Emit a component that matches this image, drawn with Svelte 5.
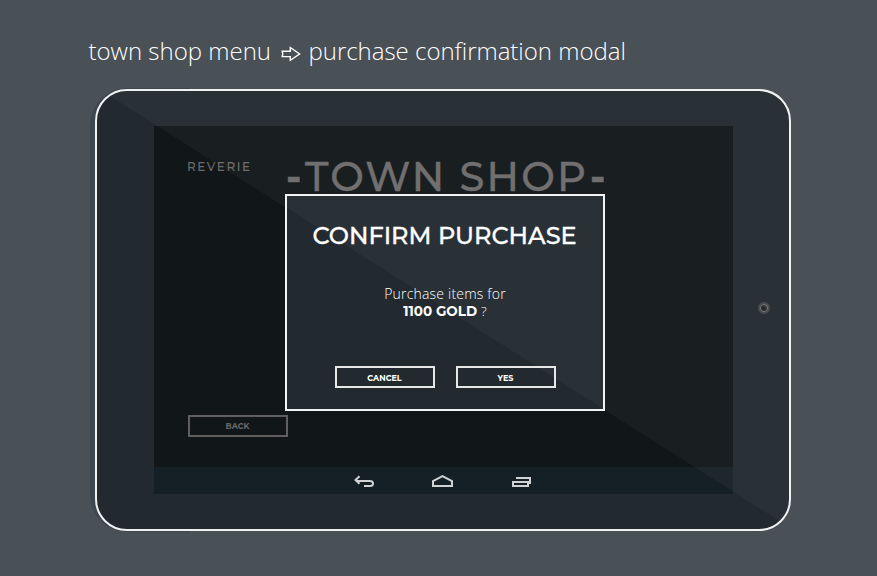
<script>
  let { price = 1100 } = $props();
</script>

<main>
  <header>
    <span class="from">town shop menu</span>
    <svg class="arrow" width="20" height="16" viewBox="0 0 20 16" aria-hidden="true">
      <path d="M1.2 5.3H9.3V1.5L18.6 8L9.3 14.3V10.6H1.2L1.8 8Z" />
    </svg>
    <span class="to">purchase confirmation modal</span>
  </header>

  <div class="tablet">
    <div class="body">
      <div class="screen">
        <section class="app">
          <div class="brand">REVERIE</div>
          <h1><i>-</i>TOWN SHOP<i>-</i></h1>
          <button class="back">BACK</button>
        </section>
        <nav>
          <svg width="22" height="14" viewBox="0 0 22 14" aria-label="Back">
            <path d="M6.5 1.2L2.5 5L6.5 8.8M3 6H17Q20 6 20 8.5Q20 11 17 11H11" />
          </svg>
          <svg width="22" height="14" viewBox="0 0 22 14" aria-label="Home">
            <path d="M1 11V6L10.5 1.2L20 6V11Z" />
          </svg>
          <svg width="22" height="14" viewBox="0 0 22 14" aria-label="Recent apps">
            <path d="M2 7H17V11H2ZM5 3H19V9" />
          </svg>
        </nav>
      </div>
      <div class="camera"></div>
      <div class="gloss"></div>
      <div class="dialog" role="dialog" aria-label="Confirm purchase">
        <h2>CONFIRM PURCHASE</h2>
        <p>Purchase items for<br /><b>{price} GOLD</b> <span>?</span></p>
        <div class="actions">
          <button>CANCEL</button>
          <button>YES</button>
        </div>
      </div>
    </div>
  </div>
</main>

<style>
  :global(body) { margin: 0; background: #495056; }
  * { box-sizing: border-box; }
  main {
    width: 877px;
    height: 576px;
    overflow: hidden;
    background: #495056;
    color: #fff;
    font-family: "Open Sans", "Noto Sans", sans-serif;
  }
  header {
    height: 88px;
    padding: 34px 0 0 88.5px;
    display: flex;
    align-items: flex-start;
    font-size: 24px;
    font-weight: 300;
    line-height: 34px;
    white-space: nowrap;
  }
  .from { width: 192.5px; }
  .to { margin-left: 7.5px; letter-spacing: -0.02px; }
  .arrow { margin-top: 12px; fill: none; stroke: #fff; stroke-width: 1.4; }
  .tablet {
    width: 701px;
    height: 444px;
    margin-left: 90px;
    padding: 1px 0 1px 5px;
    border-radius: 37px 32px 32px 37px;
    background: linear-gradient(90deg, #3d4750 100px, transparent 100px);
  }
  .body {
    position: relative;
    width: 696px;
    height: 442px;
    padding: 35px 0 0 57px;
    border: 2px solid #f0f1f1;
    border-radius: 32px;
    overflow: hidden;
    background: #222a30;
    display: flex;
  }
  .screen { width: 579px; height: 368px; background: #111618; }
  .app {
    height: 341px;
    padding: 34px 0 0 34px;
    display: grid;
    grid-template-columns: 98px 324px;
    grid-template-rows: 255px 22px;
    color: #6c6a6a;
    font-family: Montserrat, Lato, sans-serif;
  }
  .brand { margin-left: -1px; font-size: 12px; font-weight: 500; line-height: 14px; letter-spacing: 1.6px; white-space: nowrap; }
  h1 {
    margin: -6px 0 0;
    font-size: 40px;
    line-height: 46px;
    font-weight: 500;
    letter-spacing: 2.2px;
    white-space: nowrap;
    -webkit-text-stroke: 0.4px #6c6a6a;
  }
  i { display: inline-block; width: 19px; font-style: normal; font-weight: 700; letter-spacing: 0; }
  i:last-child { margin-left: 2px; }
  nav {
    height: 27px;
    padding: 8px 0 0 199px;
    display: flex;
    gap: 57px;
    background: #152026;
  }
  nav svg { fill: none; stroke: #d0d2d3; stroke-width: 2; }
  .camera {
    width: 12px;
    height: 12px;
    margin: 176px 0 0 25px;
    border: 2px solid #454748;
    border-radius: 50%;
    background: linear-gradient(45deg, #202324 50%, #505252);
    box-shadow: inset 0 0 0 1px #757676;
  }
  .gloss {
    position: absolute;
    inset: 0;
    background: rgba(255, 255, 255, 0.035);
    clip-path: polygon(0 -3.3px, 0 0, 5px 0, 692px 436px, 692px 0);
  }
  .dialog {
    position: absolute;
    z-index: 0;
    left: 188px;
    top: 103px;
    width: 320px;
    height: 217px;
    border: 2px solid #f2f3f3;
    background: #222a30;
    text-align: center;
  }
  .dialog::before {
    content: "";
    position: absolute;
    inset: 0;
    z-index: -1;
    background: rgba(255, 255, 255, 0.035);
    clip-path: polygon(0 0, 0 12px, 100% 212.6px, 100% 0);
  }
  h2 {
    margin: 23px 0 0 25.5px;
    text-align: left;
    font: 500 24px/34px Montserrat, Lato, sans-serif;
    white-space: nowrap;
    -webkit-text-stroke: 0.3px #fff;
  }
  p { margin: 32px 0 0; font-size: 14px; line-height: 17px; font-weight: 350; letter-spacing: 0.2px; color: #fff; }
  p span { font-weight: 300; font-size: 13.5px; }
  b { font: 700 13.5px/17px Montserrat, Lato, sans-serif; letter-spacing: 0; }
  .actions { display: flex; gap: 21px; margin: 46px 0 0 48px; }
  button {
    width: 100px;
    height: 22px;
    padding: 1px 1px 0 0;
    border: 2px solid #e6e7e7;
    border-radius: 0;
    background: transparent;
    color: #fff;
    font: 700 8px/18px Montserrat, Lato, sans-serif;
  }
  .back { padding-top: 0; border-color: #605f5f; color: #666; line-height: 17px; }
</style>
